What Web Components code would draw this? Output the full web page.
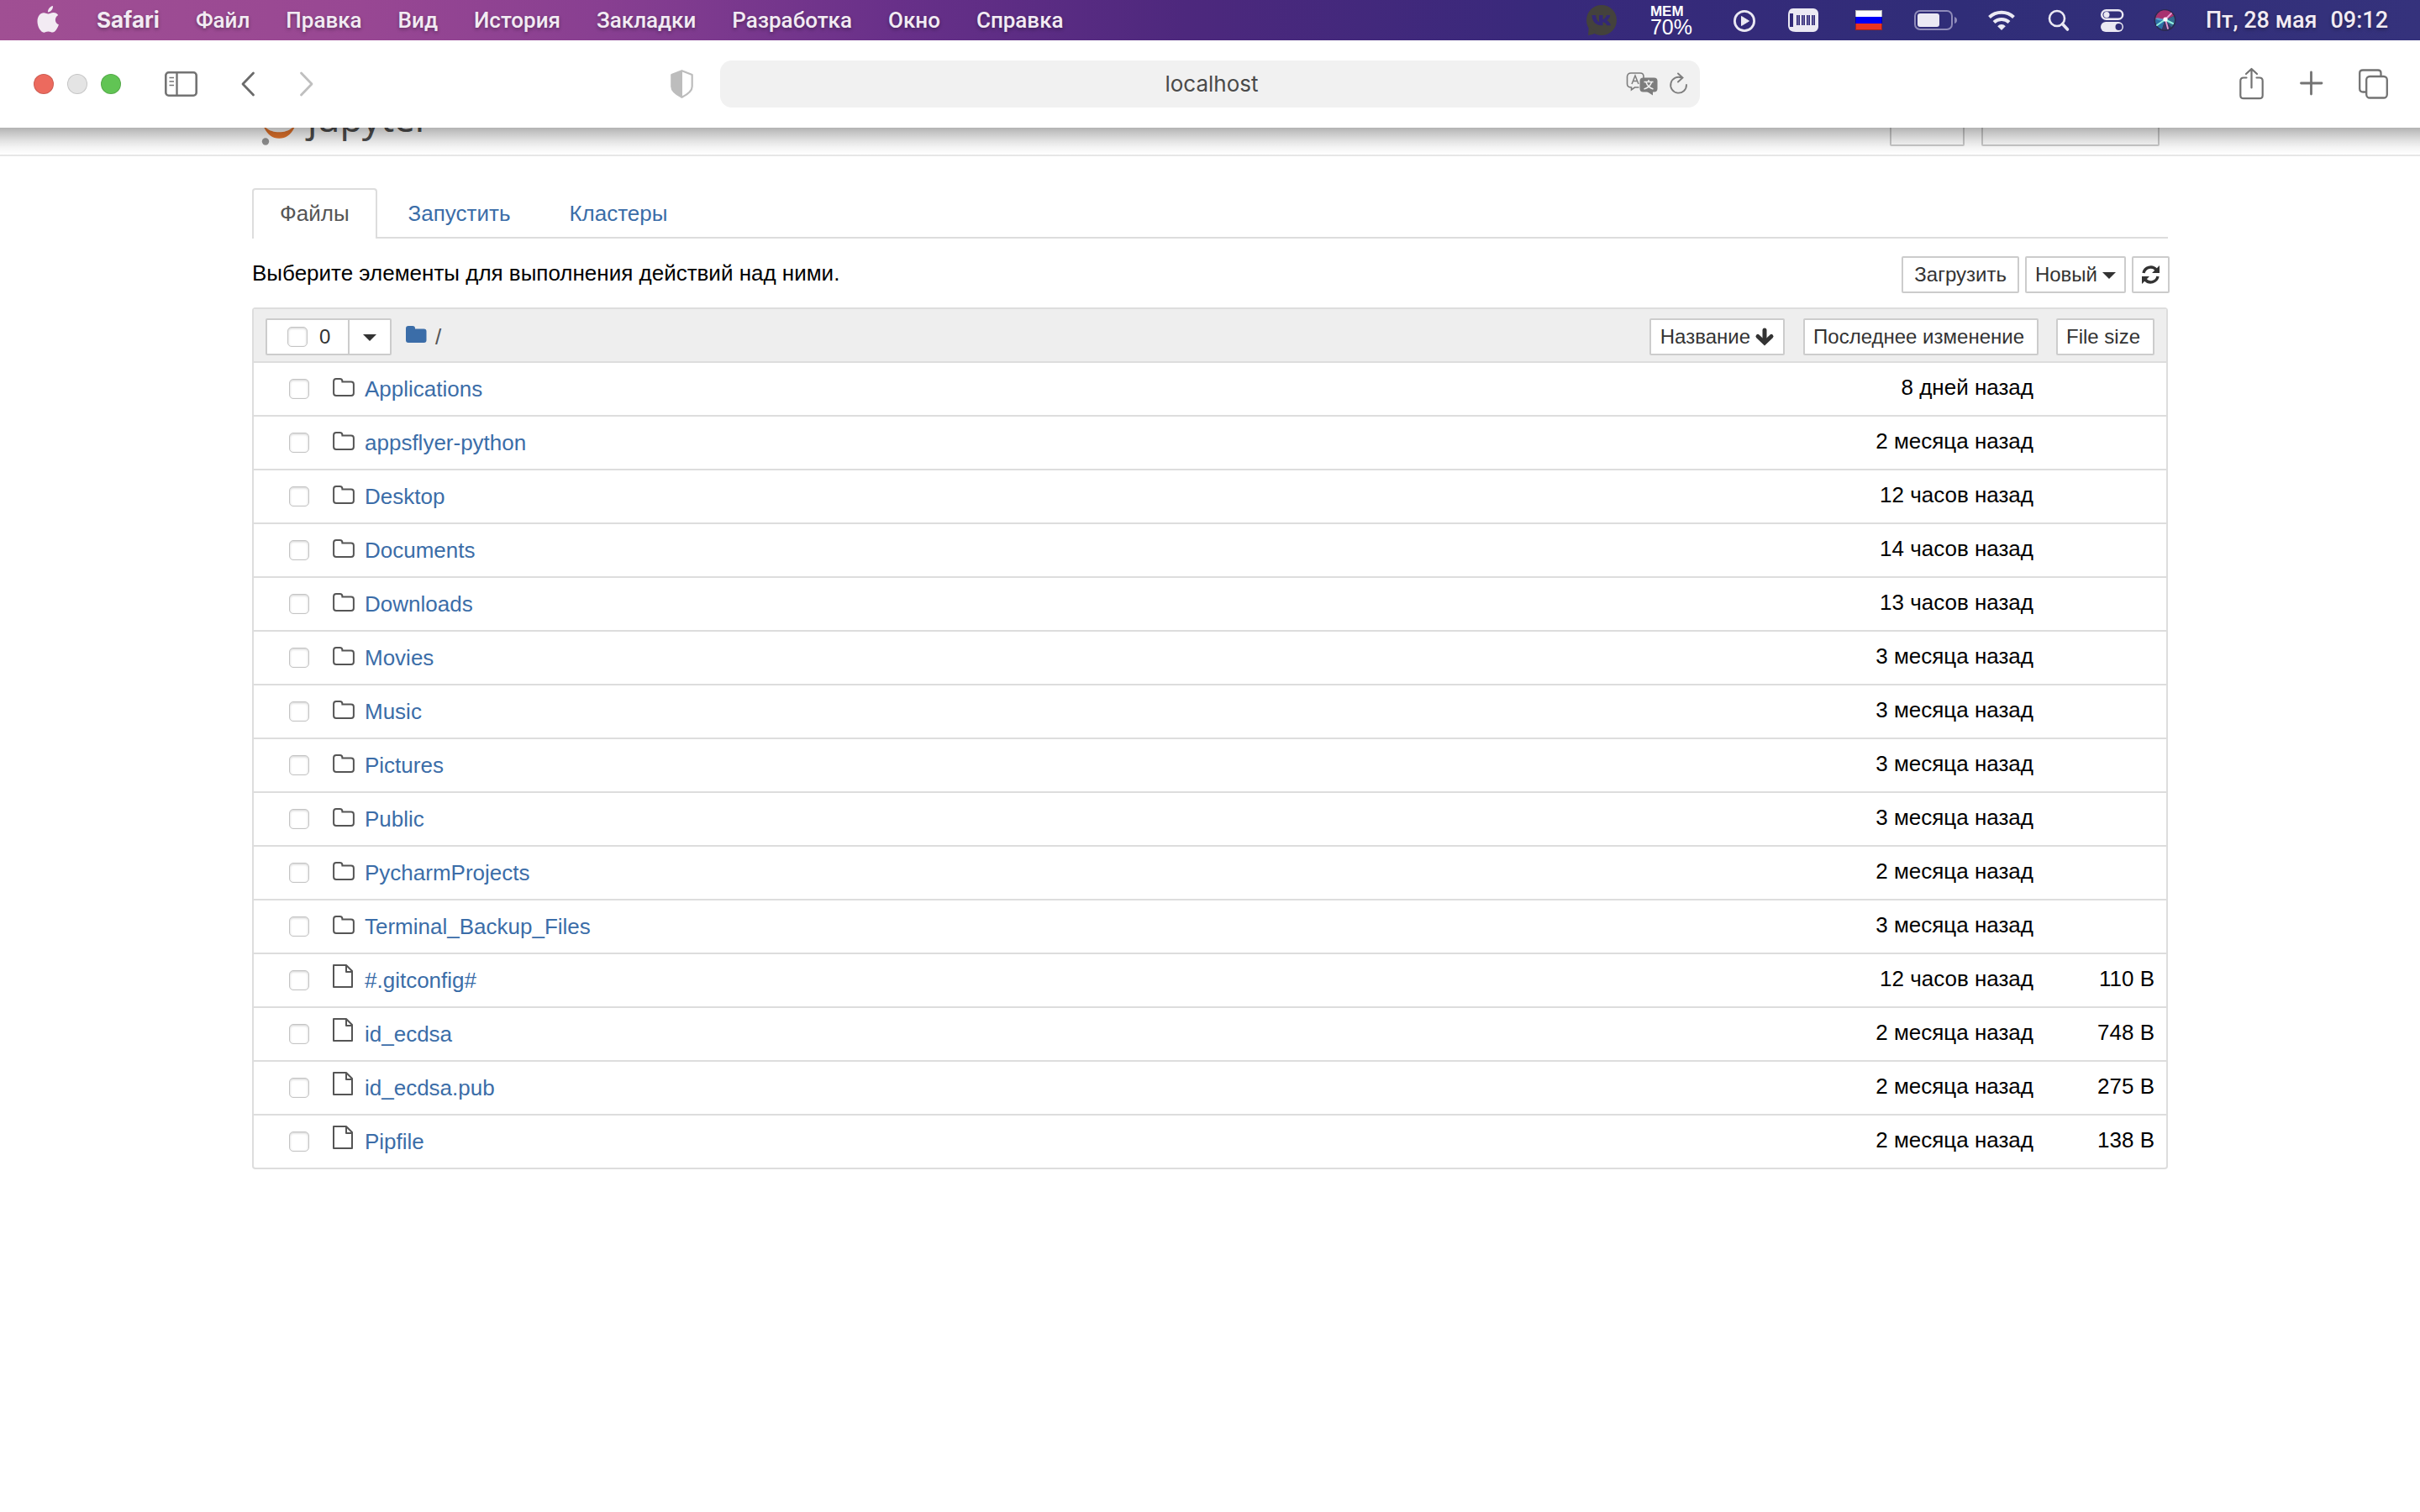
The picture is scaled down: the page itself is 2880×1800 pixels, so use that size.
<!DOCTYPE html>
<html lang="ru">
<head>
<meta charset="utf-8">
<title>Jupyter</title>
<style>
html, body { margin: 0; min-height: 100%; background: #fff; }
body { font-family: "Liberation Sans", Arial, sans-serif; font-size: 26px; line-height: 40px; color: #000; }
</style>
</head>
<body>
<menu-bar></menu-bar>
<browser-toolbar address="localhost"></browser-toolbar>
<notebook-header></notebook-header>
<notebook-page>
  <tab-strip slot="tabs"></tab-strip>
  <action-bar slot="actions">Выберите элементы для выполнения действий над ними.</action-bar>
  <file-list></file-list>
</notebook-page>
<script>
const ICONS = {
  apple: [26, 34, '<g fill="#f2ebf3"><path d="M13.4 9.6C15 9.6 17 8 19.6 8c2.500 0 4.400 1.200 5.600 2.900-4.800 3-4.200 9.400.700 11.400C24.600 26.600 21.600 31.600 18.700 31.600c-2 0-2.800-1.100-5.300-1.100-2.400 0-3.400 1.200-5.200 1.200C4.500 31.700.5 24.900.5 18.600.5 12.200 4.200 8.300 8 8.300c2.400 0 4 1.300 5.400 1.300z"/><path d="M12.900 7.400C12.800 4 15.500.6 18.900 0c.5 3.800-2.500 7.300-6 7.400z"/></g>'],
  vk: [44, 40, '<circle cx="22" cy="20" r="18" fill="#44423c"/><path d="M7 26L6 38q5 0 9-3z" fill="#44423c"/><path d="M9.500 15h4.600c.6 5.200 2.700 7.900 4 8.200V15h4.400v4.900c2-.2 3.700-2.400 4.500-4.900h4.400c-.6 2.800-2.500 5.200-4.300 6.200 1.900.9 4 2.800 5 6h-4.800c-.8-2.100-2.600-3.800-4.800-4v4h-1.500C14.600 27.200 9.800 23.500 9.500 15z" fill="#332876" transform="translate(1 -1)"/>'],
  play: [30, 30, '<circle cx="15" cy="16" r="11.600" fill="none" stroke="#ebe9f3" stroke-width="2.800"/><path d="M11.500 10.500v11l9-5.500z" fill="#ebe9f3" stroke="#ebe9f3" stroke-linejoin="round"/>'],
  card: [41, 30, '<path d="M7 1h24a6 6 0 0 1 6 6v16a6 6 0 0 1-6 6H10C4 29 1 26 1 21V9C1 4 3 1 7 1z" fill="#ebe9f3"/><path d="M3 7h4v16H3zM11 9h4v12h-4zM17 9h4v12h-4zM23 9h4v12h-4zM29 9h4v12h-4z" fill="#312a78"/><path d="M13 9v12M19 9v12M25 9v12M31 9v12" stroke="#9a94bf"/>'],
  flag: [38, 24, '<path d="M4 0h32v8H4z" fill="#fff"/><path d="M4 8h32v8H4z" fill="#0000f5"/><path d="M4 16h32v8H4z" fill="#ea3323"/><path d="M4.500.5h31v23h-31z" fill="none" stroke="#000" stroke-opacity=".3"/>'],
  battery: [52, 24, '<rect x="1" y="1" width="44" height="22" rx="6" fill="none" stroke="#8f8bb9" stroke-width="2"/><rect x="4" y="4" width="26" height="16" rx="3" fill="#ebe9f3"/><path d="M48 8q3 1 3 4t-3 4z" fill="#8f8bb9"/>'],
  wifi: [34, 26, '<g fill="none" stroke="#ebe9f3" stroke-width="4"><path d="M1.500 9.500a21 21 0 0 1 29 0"/><path d="M7 15.500a13 13 0 0 1 18 0"/></g><path d="M16 25l-4.800-4.800a6.500 6.500 0 0 1 9.600 0z" fill="#ebe9f3"/>'],
  search: [28, 28, '<circle cx="12" cy="12" r="9" fill="none" stroke="#ebe9f3" stroke-width="2.600"/><path d="M18.500 18.500l6 6.500" stroke="#ebe9f3" stroke-width="3.600" stroke-linecap="round"/>'],
  control: [27, 30, '<rect x="1.200" y="3.200" width="25" height="10.600" rx="5.300" fill="none" stroke="#ebe9f3" stroke-width="2.400"/><circle cx="7" cy="8.500" r="3.500" fill="#ebe9f3"/><rect x="0" y="17" width="27" height="12" rx="6" fill="#ebe9f3"/><circle cx="21.500" cy="23" r="4" fill="#312d78"/>'],
  siri: [26, 30, '<circle cx="13.500" cy="15" r="13" fill="#2a2a50"/><path d="M2 14a11.500 11.500 0 0 1 22-4L13.500 15z" fill="#a8326f"/><path d="M24 10a11.500 11.500 0 0 1-3 13.500L13.500 15z" fill="#34688f"/><path d="M2 14a11.500 11.500 0 0 0 8 12L13.500 15z" fill="#2d6fa6"/><path d="M10 26a11.500 11.500 0 0 0 11-2.500L13.500 15z" fill="#3a3566"/><path d="M14 14C8 13 4 11 2 13c3 3 8 3 12 1z" fill="#4fb4dc" opacity=".8"/><path d="M14 14l7-7M14 14l3 11" stroke="#e89ad0" stroke-width="1.800" stroke-linecap="round"/><path d="M13 14l10 5M14 14L4 21" stroke="#8ff0df" stroke-width="2" stroke-linecap="round"/><circle cx="14" cy="14" r="2.600" fill="#fff"/>'],
  sidebar: [39, 30, '<g fill="none" stroke="#737373"><rect x="1.300" y="1.300" width="36.400" height="27.400" rx="3.500" stroke-width="2.600"/><path d="M14.500 1v28" stroke-width="2.400"/><path d="M5.500 7.500H11M5.500 12H11M5.500 16.500H11" stroke-width="1.700"/></g>'],
  back: [16, 30, '<path d="M14.500 2L2 15l12.500 13" fill="none" stroke="#6b6b6b" stroke-width="2.800" stroke-linecap="round" stroke-linejoin="round"/>'],
  forward: [18, 30, '<path d="M3.500 2L16 15 3.500 28" fill="none" stroke="#bfbfbf" stroke-width="2.800" stroke-linecap="round" stroke-linejoin="round"/>'],
  shield: [27, 34, '<path d="M13.500 1.200L25.700 6v14c0 5-5.700 9.500-12.200 12.800C7 29.500 1.300 25 1.300 20V6z" fill="none" stroke="#bdbdbd" stroke-width="2.200" stroke-linejoin="round"/><path d="M14 1L1 6v14c0 5 6 10 13 13z" fill="#bdbdbd"/>'],
  translate: [38, 30, '<path d="M6 2h11q4 0 4 4v2M6 2Q2 2 1.500 6v9q0 4 5 4v3l4-3h5" fill="none" stroke="#7d7d7d" stroke-width="1.600"/><path d="M7 15l4-10 4 10M8.500 11.500h5" fill="none" stroke="#7d7d7d" stroke-width="1.500"/><rect x="16.500" y="7.500" width="21" height="17" rx="4" fill="#7d7d7d"/><path d="M25 24h7v4.500z" fill="#7d7d7d"/><path d="M21.500 12.500h11M27 10v2.500M24 13q2 6 8.500 8M30.500 13q-2 6-9 8" stroke="#f1f1f1" stroke-width="1.500" fill="none"/>'],
  reload: [22, 28, '<path d="M14.500 6.700A9.400 9.400 0 1 0 20 15" fill="none" stroke="#7d7d7d" stroke-width="1.900" stroke-linecap="round"/><path d="M10 1.500l5.500 5-5.500 5" fill="none" stroke="#7d7d7d" stroke-width="1.900" stroke-linecap="round"/>'],
  share: [29, 40, '<g fill="none" stroke="#737373" stroke-width="2.200" stroke-linecap="round" stroke-linejoin="round"><path d="M8.500 12.500H5q-3.700 0-3.700 3.700v17.300q0 3.700 3.700 3.700h19q3.700 0 3.700-3.700V16.200q0-3.700-3.700-3.700h-3.500"/><path d="M14.500 24.500V2M8 8l6.500-6L21 8"/></g>'],
  plus: [27, 30, '<path d="M13.500 1v26M1.500 14h24.500" stroke="#737373" stroke-width="2.800" stroke-linecap="round"/>'],
  tabs: [35, 36, '<g fill="none" stroke="#737373" stroke-width="2.300"><rect x="9.200" y="9" width="24.600" height="25.500" rx="4"/><path d="M26.500 9V5q0-3.500-3.500-3.500H5Q1.200 1.500 1.200 5v18.500q0 4 4 4h4"/></g>'],
  logo: [46, 30, '<path d="M2.500 0C7 11 13 16.800 22.200 16.800S38 11 42 0C36 7 30 9.300 22.200 9.300S8 7 2.500 0z" fill="#e8762d" transform="translate(0 -6)"/><circle cx="6" cy="14.500" r="4.200" fill="#949494"/>'],
  folder: [26, 40, '<path d="M1.100 11q0-3 3-3h4.300q3 0 3 3v.6h10.500q3 0 3 3v10.300q0 3-3 3H4.100q-3 0-3-3z" fill="none" stroke="#555" stroke-width="2"/>'],
  file: [26, 40, '<path d="M1 2h15l7 7v19H1zM16 2v8h7" fill="none" stroke="#555" stroke-width="2" stroke-linejoin="round"/>'],
  root: [25, 40, '<path d="M0 10q0-3 3-3h5q3 0 3 3v.5h10.500q3 0 3 3V24q0 3-3 3H3q-3 0-3-3z" fill="#3b6da8"/>'],
  caret: [16, 20, '<path d="M0 7h16l-8 8z" fill="#333"/>'],
  down: [22, 22, '<path d="M11 3v14" fill="none" stroke="#333" stroke-width="5" stroke-linecap="round"/><path d="M3 10.500l8 7.500 8-7.500" fill="none" stroke="#333" stroke-width="5" stroke-linecap="round"/>'],
  refresh: [21, 24, '<g fill="none" stroke="#333" stroke-width="3.400"><path d="M2 10a8.700 8.700 0 0 1 15-4"/><path d="M19 14a8.700 8.700 0 0 1-15 4"/></g><path d="M21 1v9h-9zM0 23v-9h9z" fill="#333"/>']
};

const SMALL_BUTTON = `
  button { font: inherit; font-size: 24px; line-height: 36px; height: 44px; box-sizing: border-box; margin: 0;
    padding: 0 10px; border: 2px solid #ccc; border-radius: 2px; background: #fff; color: #333;
    display: inline-flex; align-items: center; gap: 6px; white-space: nowrap; }`;
const CHECKBOX = `
  input[type=checkbox] { appearance: none; width: 24px; height: 24px; margin: 0; flex: none; box-sizing: border-box;
    border: 1px solid #c4c4c4; border-radius: 5px; background: #fff; box-shadow: inset 0 1px 3px #0003; }`;
const define = (name, html, setup) => customElements.define(name, class extends HTMLElement {
  connectedCallback() {
    if (this.shadowRoot) return;
    const t = document.createElement('template');
    t.innerHTML = html;
    this.attachShadow({ mode: 'open' }).append(t.content.cloneNode(true));
    if (setup) setup(this, this.shadowRoot);
  }
});

define('ui-icon', '<style>:host{display:inline-block;flex:none;line-height:0}svg{display:block;overflow:visible}</style>', (el, root) => {
  const [w, h, body] = ICONS[el.getAttribute('name')];
  const t = document.createElement('template');
  t.innerHTML = `<svg width="${w}" height="${h}" viewBox="0 0 ${w} ${h}" aria-hidden="true">${body}</svg>`;
  root.append(t.content);
});

define('menu-bar', `<style>
  :host { display: flex; justify-content: space-between; align-items: center; height: 48px; padding: 0 38px 0 44px; box-sizing: border-box;
    font: 500 26px/48px Roboto, sans-serif; color: #f2ebf3; text-shadow: 0 2px 4px #0005; white-space: nowrap;
    background: linear-gradient(90deg, #a04f93 0%, #984793 15%, #883f91 25%, #683089 37%, #4d287d 49%, #38297b 64%, #302d78 81%, #35327c 100%); }
  nav, .status { display: flex; align-items: center; }
  nav { gap: 43px; }
  nav button { font: inherit; color: inherit; text-shadow: inherit; background: none; border: 0; padding: 0; margin: 0; }
  nav button.app { font-family: Inter, sans-serif; font-weight: 700; }
  nav ui-icon { margin-right: 2px; }
  .status { gap: 36px; }
  .mem { display: flex; flex-direction: column; width: 61px; color: #fff; font-family: "Liberation Sans", sans-serif; text-shadow: none; }
  .mem b { font-size: 17px; line-height: 17px; }
  .mem span { font-size: 25px; line-height: 21px; }
  time { display: flex; gap: 16px; font-size: 27px; }
  </style>
  <nav><ui-icon name="apple"></ui-icon><button class="app">Safari</button><button>Файл</button><button>Правка</button><button>Вид</button><button>История</button><button>Закладки</button><button>Разработка</button><button>Окно</button><button>Справка</button></nav>
  <div class="status"><ui-icon name="vk"></ui-icon><div class="mem"><b>MEM</b><span>70%</span></div><ui-icon name="play"></ui-icon><ui-icon name="card"></ui-icon><ui-icon name="flag"></ui-icon><ui-icon name="battery"></ui-icon><ui-icon name="wifi"></ui-icon><ui-icon name="search"></ui-icon><ui-icon name="control"></ui-icon><ui-icon name="siri"></ui-icon>
  <time><span>Пт, 28 мая</span><span>09:12</span></time></div>`);

define('browser-toolbar', `<style>
  :host { display: grid; grid-template-columns: 1fr minmax(0, 1166px) 1fr; align-items: center; height: 104px; background: #fff; position: relative; }
  :host::after { content: ""; position: absolute; left: 0; right: 0; top: 100%; height: 32px; pointer-events: none;
    background: linear-gradient(#0000004d, #00000036 22%, #0000001c 50%, #0000000a 75%, #0000); }
  div { display: flex; align-items: center; }
  button { border: 0; padding: 0; margin: 0; background: none; display: flex; }
  .left { padding: 0 32px 0 40px; gap: 52px; }
  .lights { gap: 16px; }
  .lights button { width: 24px; height: 24px; border-radius: 50%; box-sizing: border-box; border: 1px solid #0002; }
  .left > :last-child { margin-left: auto; }
  .field { height: 56px; border-radius: 14px; background: #f1f1f1; padding: 0 14px 0 106px; gap: 14px; }
  input { flex: 1; min-width: 0; border: 0; padding: 0; background: none; text-align: center; font: 26px/40px Inter, sans-serif; color: #4a4a4a; }
  .right { justify-content: flex-end; gap: 43px; padding-right: 38px; }
  </style>
  <div class="left"><div class="lights"><button aria-label="Закрыть" style="background:#ec6a5e"></button><button aria-label="Свернуть" style="background:#e4e4e4"></button><button aria-label="Развернуть" style="background:#61c454"></button></div>
    <button aria-label="Боковое меню"><ui-icon name="sidebar"></ui-icon></button><button aria-label="Назад"><ui-icon name="back"></ui-icon></button><button aria-label="Вперед"><ui-icon name="forward"></ui-icon></button><button aria-label="Конфиденциальность"><ui-icon name="shield"></ui-icon></button></div>
  <div class="field"><input type="text" aria-label="Адрес"><button aria-label="Перевод"><ui-icon name="translate"></ui-icon></button><button aria-label="Обновить"><ui-icon name="reload"></ui-icon></button></div>
  <div class="right"><button aria-label="Поделиться"><ui-icon name="share"></ui-icon></button><button aria-label="Новая вкладка"><ui-icon name="plus"></ui-icon></button><button aria-label="Все вкладки"><ui-icon name="tabs"></ui-icon></button></div>`,
  (el, root) => { root.querySelector('input').value = el.getAttribute('address'); });

define('notebook-header', `<style>
  :host { display: block; height: 34px; box-sizing: border-box; overflow: hidden; border-bottom: 2px solid #e7e7e7; }
  .bar { max-width: 2280px; height: 32px; margin: 0 auto; display: flex; justify-content: space-between; align-items: flex-end; }
  a { display: flex; align-items: flex-end; gap: 10px; padding-left: 10px; color: #4e4e4e; text-decoration: none; font: 44px/60px "Noto Sans", sans-serif; }
  a span { padding-bottom: 14px; }
  .buttons { display: flex; gap: 20px; padding: 0 10px 10px 0; }
  button { height: 44px; margin: 0; border: 2px solid #ccc; border-radius: 2px; background: #fff; width: 89px; box-sizing: border-box; }
  button + button { width: 212px; }
  </style>
  <div class="bar"><a href="#"><ui-icon name="logo"></ui-icon><span>jupyter</span></a><div class="buttons"><button aria-label="Quit"></button><button aria-label="Logout"></button></div></div>`);

define('notebook-page', `<style>:host { display: block; max-width: 2280px; margin: 38px auto 0; }</style><slot name="tabs"></slot><slot name="actions"></slot><slot></slot>`);

define('tab-strip', `<style>
  :host { display: flex; gap: 4px; border-bottom: 2px solid #ddd; }
  a { color: #3b6da8; text-decoration: none; line-height: 56px; padding: 0 31px; border: 2px solid transparent; border-bottom: 0; border-radius: 4px 4px 0 0; }
  a.active { color: #555; background: #fff; border-color: #ddd; margin-bottom: -2px; padding-bottom: 2px; }
  </style><a class="active" href="#files">Файлы</a><a href="#running">Запустить</a><a href="#clusters">Кластеры</a>`);

define('action-bar', `<style>
  :host { display: flex; justify-content: space-between; align-items: flex-start; padding: 21px 0 17px; }
  .buttons { display: flex; gap: 7px; margin-right: -2px; }
  ${SMALL_BUTTON}
  button.wide { padding: 0 13px; }
  </style><span><slot></slot></span><div class="buttons"><button class="wide">Загрузить</button><button>Новый<ui-icon name="caret"></ui-icon></button><button aria-label="Обновить список"><ui-icon name="refresh"></ui-icon></button></div>`);

const FILES = [
  ['Applications', '8 дней назад'], ['appsflyer-python', '2 месяца назад'], ['Desktop', '12 часов назад'],
  ['Documents', '14 часов назад'], ['Downloads', '13 часов назад'], ['Movies', '3 месяца назад'],
  ['Music', '3 месяца назад'], ['Pictures', '3 месяца назад'], ['Public', '3 месяца назад'],
  ['PycharmProjects', '2 месяца назад'], ['Terminal_Backup_Files', '3 месяца назад'],
  ['#.gitconfig#', '12 часов назад', '110 B'], ['id_ecdsa', '2 месяца назад', '748 B'],
  ['id_ecdsa.pub', '2 месяца назад', '275 B'], ['Pipfile', '2 месяца назад', '138 B']
];
define('file-list', `<style>
  :host { display: block; border: 2px solid #ddd; border-radius: 4px; }
  table { width: 100%; border-collapse: separate; border-spacing: 0; }
  th { background: #eee; font-weight: 400; text-align: right; padding: 11px 0 7px; height: 44px; border-bottom: 2px solid #ddd; }
  th:last-child, td:last-child { width: 138px; padding-right: 14px; }
  th:nth-child(2) { width: 302px; }
  td { padding: 0; height: 62px; border-bottom: 2px solid #ddd; text-align: right; }
  tr:last-child td { border-bottom: 0; }
  td + td { padding: 0 6px 4px 0; height: 58px; white-space: nowrap; }
  .head, .group, label, .name, .crumbs, th > span { display: flex; align-items: center; }
  th > span { justify-content: flex-end; }
  .head { padding-left: 14px; }
  .head > button { margin-left: auto; padding: 0 11px; }
  label { box-sizing: border-box; height: 44px; width: 100px; border: 2px solid #ccc; border-radius: 2px 0 0 2px; background: #fff; padding-left: 24px; gap: 14px; font-size: 24px; color: #333; }
  .crumbs { gap: 10px; padding-left: 17px; color: #555; }
  .name { padding-left: 42px; }
  .name ui-icon { padding: 0 12px 0 28px; }
  a { color: #3b6da8; text-decoration: none; display: flex; }
  ${SMALL_BUTTON} ${CHECKBOX}
  .group button { margin-left: -2px; padding: 0 16px; }
  .head > button { padding: 0 11px; }
  th > span button { padding-right: 15px; }
  </style>
  <table><thead><tr><th><div class="head"><div class="group"><label><input type="checkbox"><span>0</span></label><button aria-label="Выбрать"><ui-icon name="caret"></ui-icon></button></div>
  <div class="crumbs"><a href="#" aria-label="Корневая папка"><ui-icon name="root"></ui-icon></a><span>/</span></div><button>Название <ui-icon name="down"></ui-icon></button></div></th>
  <th><span><button>Последнее изменение</button></span></th><th><span><button>File size</button></span></th></tr></thead><tbody></tbody></table>`,
  (el, root) => {
    root.querySelector('tbody').innerHTML = FILES.map(([name, date, size]) => `<tr><td><div class="name"><input type="checkbox" aria-label="${name}"><ui-icon name="${size ? 'file' : 'folder'}"></ui-icon><a href="#">${name}</a></div></td><td>${date}</td><td>${size || ''}</td></tr>`).join('');
  });
</script>
</body>
</html>
